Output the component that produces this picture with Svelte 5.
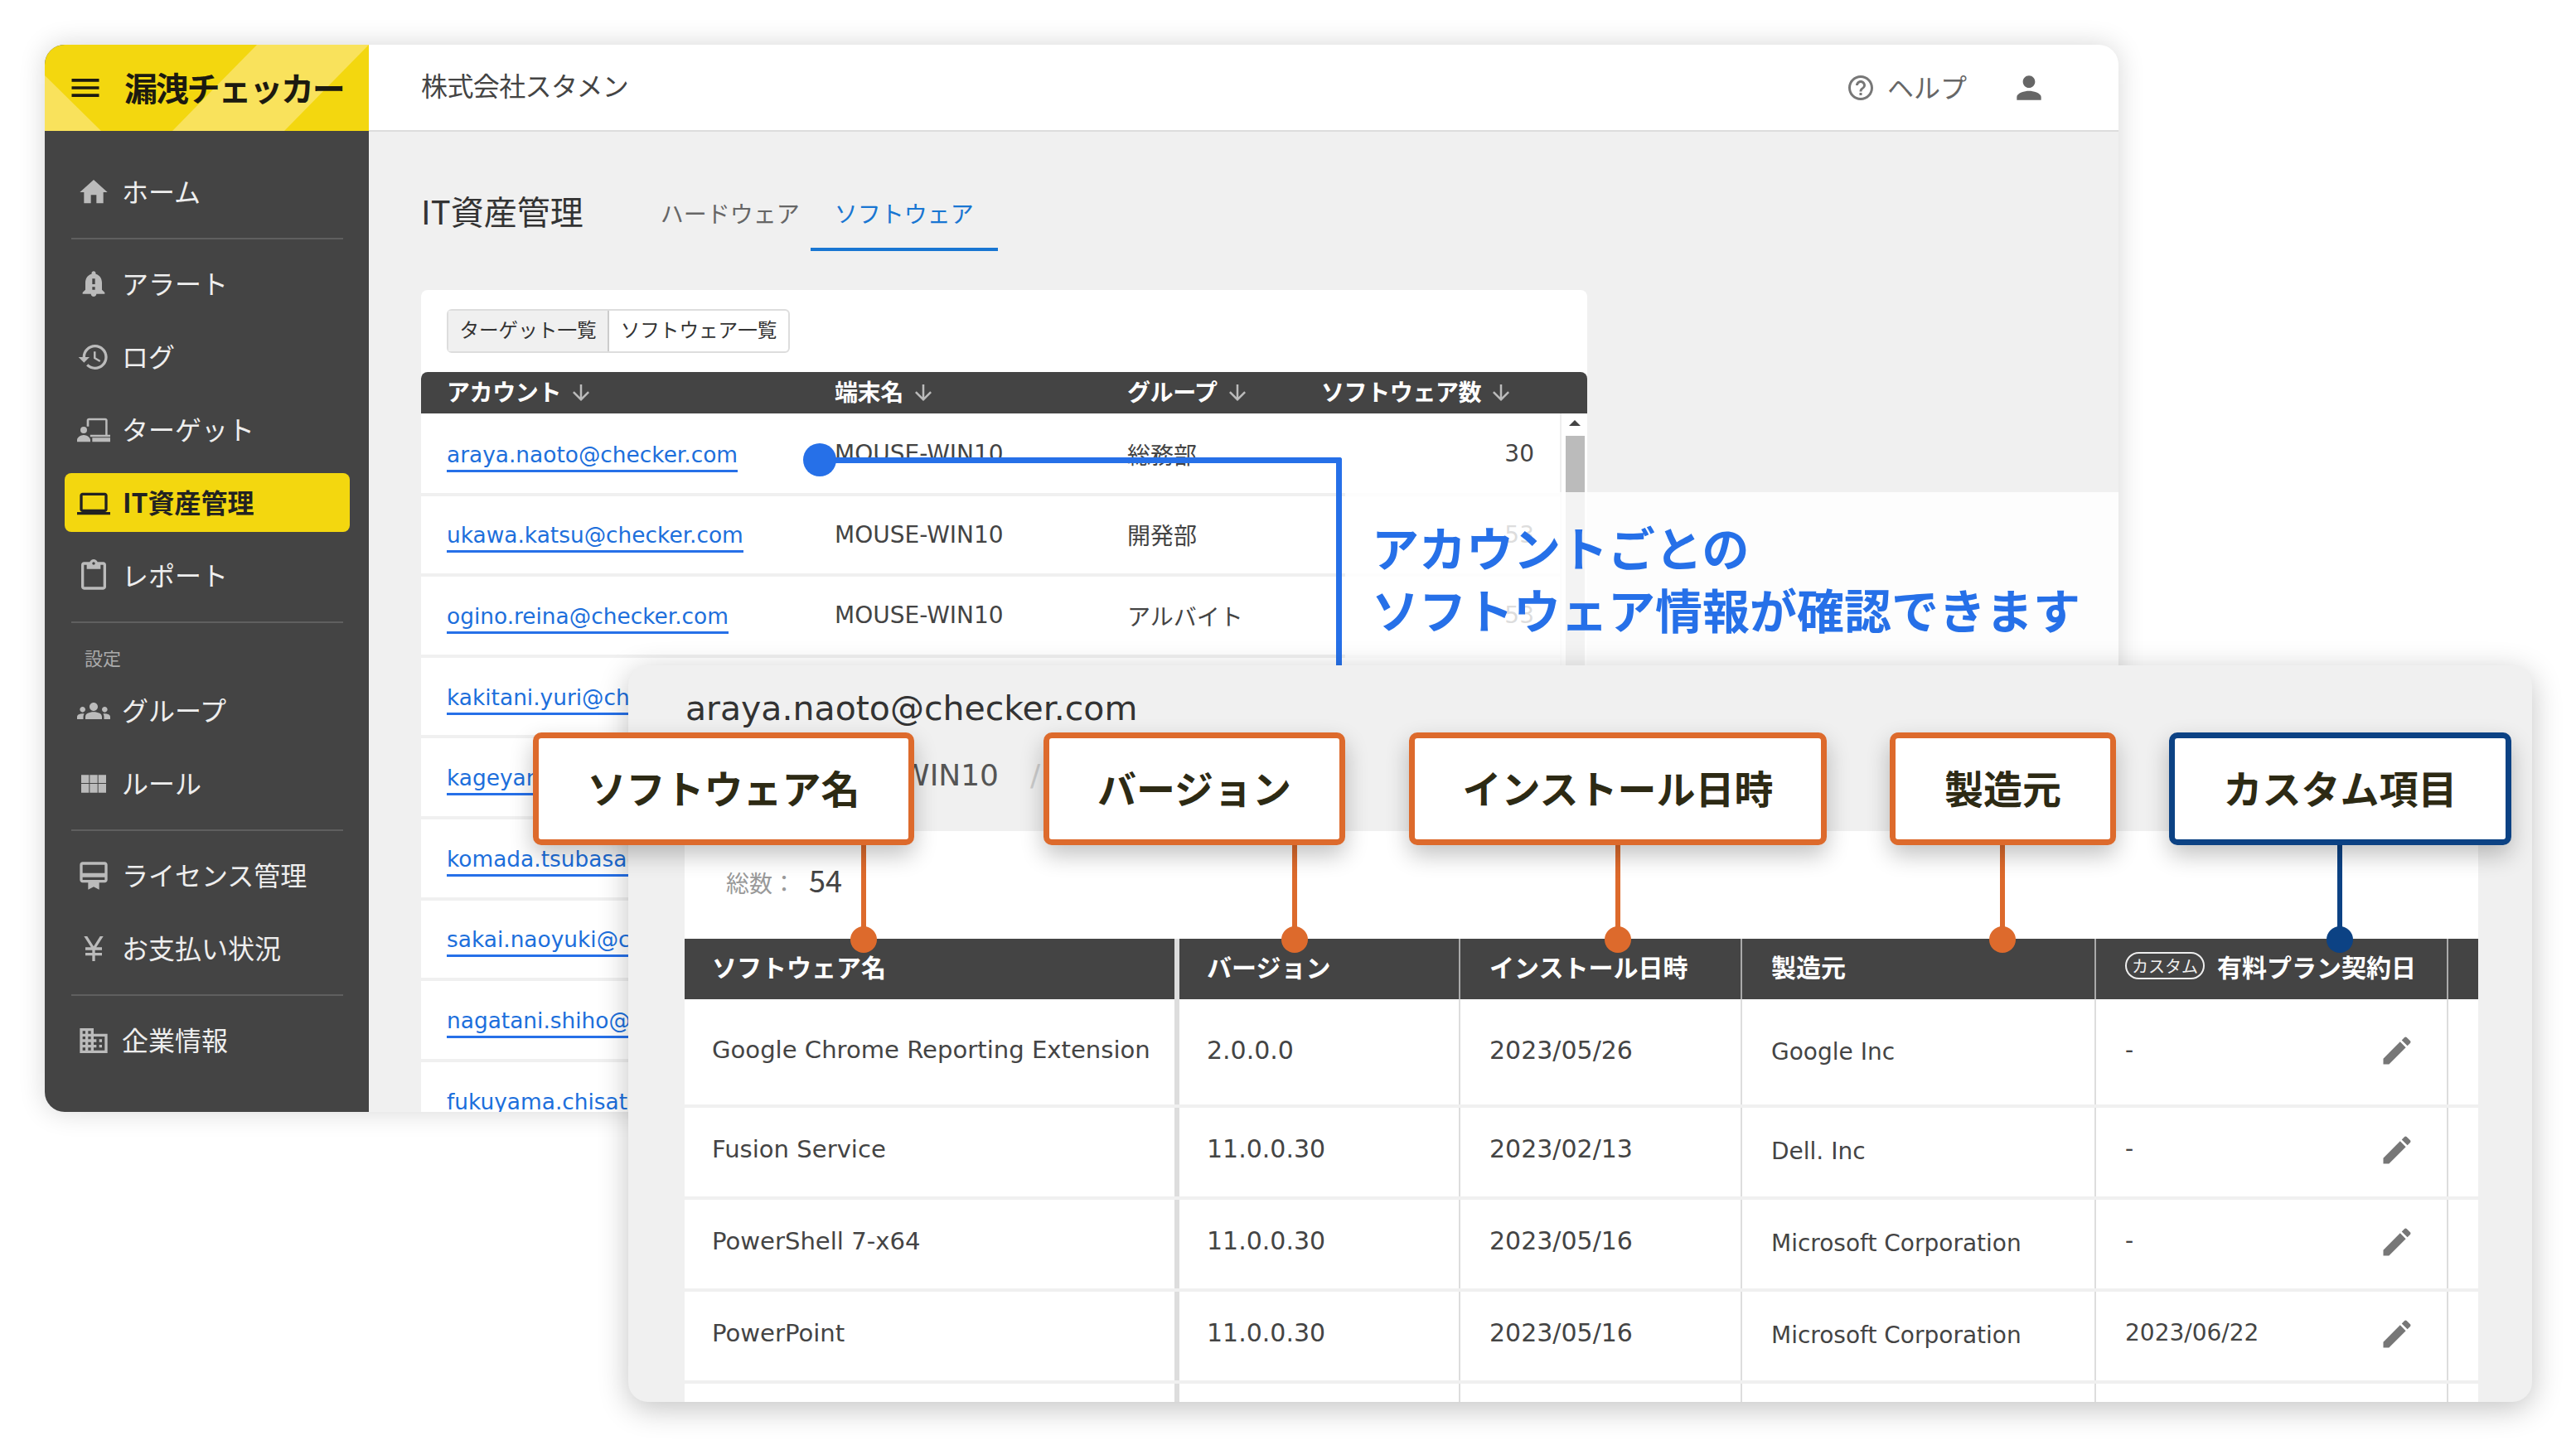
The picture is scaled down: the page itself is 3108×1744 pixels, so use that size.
<script>
  const I = {
    home: 'M10 20v-6h4v6h5v-8h3L12 3 2 12h3v8z',
    bell: 'M18 16v-5c0-3.07-1.64-5.64-4.5-6.32V4c0-.83-.67-1.5-1.5-1.5s-1.5.67-1.5 1.5v.68C7.63 5.36 6 7.93 6 11v5l-2 2v1h16v-1l-2-2zm-5 0h-2v-2h2v2zm0-4h-2V8h2v4zm-1 9c1.1 0 2-.9 2-2h-4c0 1.1.9 2 2 2z',
    hist: 'M13 3c-4.97 0-9 4.03-9 9H1l3.89 3.89.07.14L9 12H6c0-3.87 3.13-7 7-7s7 3.13 7 7-3.13 7-7 7c-1.93 0-3.68-.79-4.94-2.06l-1.42 1.42C8.27 19.99 10.51 21 13 21c4.97 0 9-4.03 9-9s-4.03-9-9-9zm-1 5v5l4.28 2.54.72-1.21-3.5-2.08V8H12z',
    target: 'M7 5c0-.9.7-1.6 1.6-1.6h11.8c.9 0 1.6.7 1.6 1.6v10.4H24V17H9.5v-1.6h11V5H8.6v4.4H7V5zM4.8 9.6a2.4 2.4 0 1 1 0 4.8 2.4 2.4 0 0 1 0-4.8zM0 19.2c0-1.9 2.7-3.6 4.8-3.6s4.8 1.7 4.8 3.6V20.6H0v-1.4zM11 17.6h13v3H11z',
    laptop: 'M20 18c1.1 0 1.99-.9 1.99-2L22 6c0-1.1-.9-2-2-2H4c-1.1 0-2 .9-2 2v10c0 1.1.9 2 2 2H0v2h24v-2h-4zM4 6h16v10H4V6z',
    clip: 'M19 2h-4.18C14.4.84 13.3 0 12 0c-1.3 0-2.4.84-2.82 2H5c-1.1 0-2 .9-2 2v16c0 1.1.9 2 2 2h14c1.1 0 2-.9 2-2V4c0-1.1-.9-2-2-2zm-7 0c.55 0 1 .45 1 1s-.45 1-1 1-1-.45-1-1 .45-1 1-1zm7 18H5V4h2v3h10V4h2v16z',
    groups: 'M12 12.75c1.63 0 3.07.39 4.24.9 1.08.48 1.76 1.56 1.76 2.73V18H6v-1.61c0-1.18.68-2.26 1.76-2.73 1.17-.52 2.61-.91 4.24-.91zM4 13c1.1 0 2-.9 2-2s-.9-2-2-2-2 .9-2 2 .9 2 2 2zm1.13 1.1c-.37-.06-.74-.1-1.13-.1-.99 0-1.93.21-2.78.58C.48 14.9 0 15.62 0 16.43V18h4.5v-1.61c0-.83.23-1.61.63-2.29zM20 13c1.1 0 2-.9 2-2s-.9-2-2-2-2 .9-2 2 .9 2 2 2zm4 3.43c0-.81-.48-1.53-1.22-1.85-.85-.37-1.79-.58-2.78-.58-.39 0-.76.04-1.13.1.4.68.63 1.46.63 2.29V18H24v-1.57zM12 6c1.66 0 3 1.34 3 3s-1.34 3-3 3-3-1.34-3-3 1.34-3 3-3z',
    grid: 'M3 5.5h5.6v5.9H3zM9.2 5.5h5.6v5.9H9.2zM15.4 5.5H21v5.9h-5.6zM3 12h5.6v6.5H3zM9.2 12h5.6v6.5H9.2zM15.4 12H21v6.5h-5.6z',
    card: 'M20 2H4c-1.11 0-2 .89-2 2v11c0 1.11.89 2 2 2h4v5l4-2 4 2v-5h4c1.11 0 2-.89 2-2V4c0-1.11-.89-2-2-2zm0 13H4v-2h16v2zm0-5H4V4h16v6z',
    yen: 'M13.92 11H18v2h-5v2h5v2h-5v4h-2v-4H6v-2h5v-2H6v-2h4.08L5 3h2.37L12 10.29 16.63 3H19z',
    domain: 'M12 7V3H2v18h20V7H12zM6 19H4v-2h2v2zm0-4H4v-2h2v2zm0-4H4V9h2v2zm0-4H4V5h2v2zm4 12H8v-2h2v2zm0-4H8v-2h2v2zm0-4H8V9h2v2zm0-4H8V5h2v2zm10 12h-8v-2h2v-2h-2v-2h2v-2h-2V9h8v10zm-2-8h-2v2h2v-2zm0 4h-2v2h2v-2z',
    help: 'M11 18h2v-2h-2v2zm1-16C6.48 2 2 6.48 2 12s4.48 10 10 10 10-4.48 10-10S17.52 2 12 2zm0 18c-4.41 0-8-3.59-8-8s3.59-8 8-8 8 3.59 8 8-3.59 8-8 8zm0-14c-2.21 0-4 1.79-4 4h2c0-1.1.9-2 2-2s2 .9 2 2c0 2-3 1.75-3 5h2c0-2.25 3-2.5 3-5 0-2.21-1.79-4-4-4z',
    person: 'M12 12c2.21 0 4-1.79 4-4s-1.79-4-4-4-4 1.79-4 4 1.79 4 4 4zm0 2c-2.67 0-8 1.34-8 4v2h16v-2c0-2.66-5.33-4-8-4z',
    edit: 'M3 17.25V21h3.75L17.81 9.94l-3.75-3.75L3 17.25zM20.71 7.04c.39-.39.39-1.02 0-1.41l-2.34-2.34c-.39-.39-1.02-.39-1.41 0l-1.83 1.83 3.75 3.75 1.83-1.83z',
    menu: 'M3 18h18v-2H3v2zm0-5h18v-2H3v2zm0-7v2h18V6H3z',
    down: 'M20 12l-1.41-1.41L13 16.17V4h-2v12.17l-5.58-5.59L4 12l8 8 8-8z'
  };
  const nav = [
    [['ホーム', 'home']],
    [['アラート', 'bell'], ['ログ', 'hist'], ['ターゲット', 'target'], ['IT資産管理', 'laptop', true], ['レポート', 'clip']],
    [['グループ', 'groups'], ['ルール', 'grid']],
    [['ライセンス管理', 'card'], ['お支払い状況', 'yen']],
    [['企業情報', 'domain']]
  ];
  const accounts = [
    ['araya.naoto@checker.com', 'MOUSE-WIN10', '総務部', '30'],
    ['ukawa.katsu@checker.com', 'MOUSE-WIN10', '開発部', '53'],
    ['ogino.reina@checker.com', 'MOUSE-WIN10', 'アルバイト', '53'],
    ['kakitani.yuri@checker.com', '', '', ''],
    ['kageyama.ken@checker.com', '', '', ''],
    ['komada.tsubasa@checker.com', '', '', ''],
    ['sakai.naoyuki@checker.com', '', '', ''],
    ['nagatani.shiho@checker.com', '', '', ''],
    ['fukuyama.chisato@checker.com', '', '', '']
  ];
  const software = [
    ['Google Chrome Reporting Extension', '2.0.0.0', '2023/05/26', 'Google Inc', '-'],
    ['Fusion Service', '11.0.0.30', '2023/02/13', 'Dell. Inc', '-'],
    ['PowerShell 7-x64', '11.0.0.30', '2023/05/16', 'Microsoft Corporation', '-'],
    ['PowerPoint', '11.0.0.30', '2023/05/16', 'Microsoft Corporation', '2023/06/22']
  ];
  const callouts = [
    { t: 'ソフトウェア名', l: 643, w: 460, s: 1042 },
    { t: 'バージョン', l: 1259, w: 364, s: 1562 },
    { t: 'インストール日時', l: 1700, w: 504, s: 1952 },
    { t: '製造元', l: 2280, w: 273, s: 2416 },
    { t: 'カスタム項目', l: 2617, w: 413, s: 2823, navy: true }
  ];
</script>

{#snippet icon(d, cls = 'ic')}
  <svg class={cls} viewBox="0 0 24 24" aria-hidden="true"><path {d} /></svg>
{/snippet}

<div class="canvas">
  <section class="win back">
    <aside class="side">
      <div class="brand">
        <svg class="stripes" viewBox="0 0 391 104" preserveAspectRatio="none" aria-hidden="true">
          <polygon points="0,37 68,104 0,104" />
          <polygon points="154,104 256,0 391,0 289,104" />
        </svg>
        {@render icon(I.menu, 'burger')}
        <span class="logo">漏洩チェッカー</span>
      </div>
      <nav class="nav">
        {#each nav as group, g}
          {#if g > 0}<div class="rule"></div>{/if}
          {#if g === 2}<div class="label">設定</div>{/if}
          {#each group as [text, ic, active]}
            <div class="item"><div class="pill" class:active>{@render icon(I[ic])}<span>{text}</span></div></div>
          {/each}
        {/each}
      </nav>
    </aside>
    <div class="main">
      <header class="top">
        <span class="co">株式会社スタメン</span>
        <div class="top-right">
          {@render icon(I.help, 'help')}<span class="help-t">ヘルプ</span>
          {@render icon(I.person, 'user')}
        </div>
      </header>
      <div class="content">
        <div class="title-row">
          <h1>IT資産管理</h1>
          <span class="tab">ハードウェア</span>
          <span class="tab on">ソフトウェア</span>
        </div>
        <div class="card">
          <div class="toggle"><span class="sel">ターゲット一覧</span><span>ソフトウェア一覧</span></div>
          <div class="ahead">
            <span>アカウント{@render icon(I.down, 'arrow')}</span>
            <span>端末名{@render icon(I.down, 'arrow')}</span>
            <span>グループ{@render icon(I.down, 'arrow')}</span>
            <span>ソフトウェア数{@render icon(I.down, 'arrow')}</span>
          </div>
          <div class="abody">
            {#each accounts as [mail, dev, grp, n]}
              <div class="arow">
                <span><span class="mail">{mail}</span></span>
                <span class="lat">{dev}</span><span>{grp}</span><span class="num lat">{n}</span>
              </div>
            {/each}
            <div class="sbar"><i class="up"></i><i class="thumb"></i></div>
          </div>
        </div>
      </div>
    </div>
  </section>

  <div class="band">
    <p>アカウントごとの<br />ソフトウェア情報が確認できます</p>
  </div>
  <div class="lead"></div>
  <div class="lead-dot"></div>

  <section class="win front">
    <div class="fhead">
      <div class="ftitle">araya.naoto@checker.com</div>
      <div class="crumb"><span class="cname">MOUSE-WIN10</span><span class="slash">/</span></div>
    </div>
    <div class="panel">
      <div class="count"><span class="cl">総数：</span><span class="cv">54</span></div>
      <div class="srow shead">
        <div>ソフトウェア名</div><div>バージョン</div><div>インストール日時</div><div>製造元</div>
        <div><span class="badge">カスタム</span>有料プラン契約日</div><div></div>
      </div>
      {#each software as [a, b, c, d, e], i}
        <div class="srow sbody" class:first={i === 0}>
          <div class="name">{a}</div><div>{b}</div><div>{c}</div><div class="maker">{d}</div>
          <div class="cust"><span>{e}</span>{@render icon(I.edit, 'pen')}</div><div></div>
        </div>
      {/each}
      <div class="srow sbody tail"><div></div><div></div><div></div><div></div><div></div><div></div></div>
    </div>
  </section>

  {#each callouts as c}
    <div class="stem" class:navy={c.navy} style:left="{c.s - 3}px"></div>
    <div class="dot" class:navy={c.navy} style:left="{c.s - 16}px"></div>
    <div class="call" class:navy={c.navy} style:left="{c.l}px" style:width="{c.w}px">{c.t}</div>
  {/each}
</div>

<style>
  :global(body) { margin: 0; background: #fff; }
  .canvas {
    position: relative; width: 3108px; height: 1744px; overflow: hidden; background: #fff;
    font-family: "Noto Sans CJK JP", "Noto Sans", sans-serif; color: #444;
  }
  .win { position: absolute; overflow: hidden; border-radius: 24px; }
  .back {
    left: 54px; top: 54px; width: 2502px; height: 1288px; display: flex; background: #f0f0f0;
    box-shadow: 0 0 32px rgba(0, 0, 0, .16);
  }
  svg { display: block; fill: currentColor; flex: none; }

  .side { width: 391px; flex: none; background: #444; display: flex; flex-direction: column; }
  .brand { position: relative; height: 104px; background: #f3d70f; display: flex; align-items: center; color: #1c1a10; }
  .stripes { position: absolute; inset: 0; width: 100%; height: 100%; fill: #f9e25c; }
  .burger { position: relative; width: 44px; height: 44px; margin-left: 27px; }
  .logo { position: relative; margin-left: 25px; margin-top: -2px; font-size: 40px; font-weight: 700; letter-spacing: -2.2px; white-space: nowrap; line-height: 1; }
  .nav { display: flex; flex-direction: column; padding-top: 28px; }
  .rule { height: 2px; background: #5f5f5f; margin: 13px 31px 8px 32px; }
  .label { font-size: 22px; color: #aaa; padding: 19px 0 0 48px; height: 33px; line-height: 28px; }
  .item { height: 88px; display: flex; align-items: center; padding: 0 23px 0 24px; }
  .pill { flex: 1; height: 71px; display: flex; align-items: center; gap: 14px; padding-left: 15px; border-radius: 8px; color: #eee; font-size: 32px; white-space: nowrap; }
  .ic { width: 40px; height: 40px; color: #bbb; margin-top: 3px; }
  .pill.active { background: #f3d70f; color: #222; font-weight: 700; margin-top: 2px; }
  .pill.active span { margin-top: -2px; margin-left: 1px; }
  .pill.active .ic { color: #222; }

  .main { flex: 1; min-width: 0; display: flex; flex-direction: column; }
  .top { height: 105px; flex: none; box-sizing: border-box; background: #fff; border-bottom: 2px solid #ddd; display: flex; align-items: center; padding-left: 63px; }
  .co { font-size: 32px; color: #444; margin-top: -8px; letter-spacing: -.6px; }
  .top-right { margin-left: auto; display: flex; align-items: center; color: #777; margin-right: 86px; }
  .help { width: 36px; height: 36px; margin-right: 14px; }
  .help-t { font-size: 32px; margin-top: -4px; color: #666; }
  .user { width: 44px; height: 44px; margin-left: 53px; color: #666; }
  .content { padding-left: 63px; }
  .title-row { height: 144px; display: flex; align-items: flex-end; }
  h1 { margin: 0 0 21px; font-size: 40px; font-weight: 400; color: #333; line-height: 56px; white-space: nowrap; }
  .tab { height: 88px; box-sizing: border-box; line-height: 84px; font-size: 28px; color: #666; white-space: nowrap; padding: 0 13px 0 29px; }
  .title-row h1 + .tab { margin-left: 64px; }
  .tab.on { color: #1976d2; border-bottom: 4px solid #1976d2; padding: 0 29px; }
  .card { width: 1407px; margin-top: 47px; background: #fff; border-radius: 8px 8px 0 0; padding-top: 23px; }
  .toggle { display: flex; width: 414px; height: 53px; box-sizing: border-box; margin: 0 0 23px 31px; border: 2px solid #ddd; border-radius: 6px; font-size: 23.6px; color: #333; line-height: 44px; }
  .toggle span { flex: 1; text-align: center; white-space: nowrap; }
  .toggle .sel { flex: none; width: 192px; background: #f0f0f0; border-right: 2px solid #ccc; }
  .ahead, .arow { display: grid; grid-template-columns: 468px 353px 234px 1fr; padding-left: 31px; }
  .ahead { height: 50px; background: #444; color: #fff; border-radius: 8px 8px 0 0; font-size: 28px; font-weight: 700; align-items: center; line-height: 1; letter-spacing: -.4px; }
  .ahead span { display: flex; align-items: center; white-space: nowrap; margin-top: -5px; }
  .arrow { width: 30px; height: 30px; margin-left: 9px; margin-top: 5px; color: #bbb; }
  .abody { position: relative; padding-top: 2px; }
  .arow { height: 97.6px; box-sizing: border-box; border-bottom: 4px solid #f0f0f0; align-items: center; font-size: 28px; white-space: nowrap; }
  .lat { font-family: "DejaVu Sans", sans-serif; }
  .mail { color: #1d6fdc; border-bottom: 3px solid #2670e8; font-family: "DejaVu Sans", sans-serif; font-size: 26.4px; line-height: 36px; display: inline-block; }
  .num { text-align: right; padding-right: 64px; }
  .sbar { position: absolute; right: 0; top: 0; bottom: 0; width: 33px; background: #fff; border-left: 2px solid #eee; box-sizing: border-box; }
  .up { position: absolute; left: 9px; top: 8px; border: 6px solid transparent; border-top: 0; border-bottom: 7px solid #444; border-left-width: 7px; border-right-width: 7px; }
  .thumb { position: absolute; left: 5px; right: 3px; top: 27px; height: 400px; background: #bbb; }

  .band { position: absolute; left: 1623px; top: 594px; width: 933px; height: 212px; background: rgba(255, 255, 255, .82); box-sizing: border-box; padding: 28px 0 0 32px; }
  .band p { margin: 0; color: #2670e8; font-size: 57px; font-weight: 700; line-height: 75px; white-space: nowrap; }
  .lead { position: absolute; left: 989px; top: 552px; width: 630px; height: 260px; box-sizing: border-box; border-top: 7px solid #2670e8; border-right: 7px solid #2670e8; border-top-right-radius: 3px; }
  .lead-dot { position: absolute; left: 969px; top: 535px; width: 40px; height: 40px; border-radius: 50%; background: #2670e8; }

  .front { left: 758px; top: 803px; width: 2297px; height: 889px; background: #f0f0f0; box-shadow: 0 8px 36px rgba(0, 0, 0, .24); }
  .fhead { height: 200px; padding: 26px 0 0 69px; box-sizing: border-box; }
  .ftitle { font-family: "DejaVu Sans", sans-serif; font-size: 41px; line-height: 52px; color: #333; }
  .crumb { display: flex; margin-top: 33px; font-family: "DejaVu Sans", sans-serif; font-size: 36px; line-height: 44px; color: #555; }
  .cname { width: 378px; text-align: right; white-space: nowrap; }
  .slash { margin-left: 38px; color: #ccc; }
  .panel { margin-left: 68px; width: 2164px; height: 689px; background: #fff; overflow: hidden; }
  .count { height: 130px; box-sizing: border-box; padding: 32px 0 0 50px; display: flex; align-items: baseline; }
  .cl { font-size: 28px; color: #999; width: 100px; }
  .cv { font-size: 36px; color: #444; }
  .srow { display: grid; grid-template-columns: 597px 339px 340px 427px 425px 36px; }
  .srow > div { box-sizing: border-box; padding-left: 35px; display: flex; align-items: center; white-space: nowrap; border-right: 2px solid #ddd; }
  .srow > div:first-child { border-right: 6px solid #ddd; padding-left: 33px; }
  .srow > div:nth-child(2) { padding-left: 33px; }
  .srow > div:last-child { padding: 0; border: 0; }
  .shead { height: 73px; background: #444; color: #fff; font-size: 30px; font-weight: 700; }
  .shead > div { border-right-color: #aaa; padding-bottom: 8px; }
  .badge { font-size: 20px; font-weight: 400; width: 96px; height: 33px; box-sizing: border-box; border: 2px solid #eee; border-radius: 17px; display: flex; align-items: center; justify-content: center; margin-right: 15px; color: #eee; }
  .sbody { height: 111px; box-sizing: border-box; font-family: "DejaVu Sans", sans-serif; font-size: 30px; border-bottom: 4px solid #f0f0f0; }
  .sbody.first { height: 131px; }
  .sbody > div { padding-bottom: 8px; }
  .sbody.first > div { padding-bottom: 5px; }
  .tail { border: 0; }
  .name { font-size: 29.1px; }
  .maker { font-size: 28px; padding-top: 5px; }
  .cust { justify-content: space-between; padding-right: 38px; font-size: 28px; }
  .pen { width: 44px; height: 44px; color: #777; margin-top: 2px; }

  .call {
    position: absolute; top: 884px; height: 136px; padding-bottom: 5px; box-sizing: border-box; background: #fff; border: 7px solid #dd6a2c; border-radius: 10px;
    display: flex; align-items: center; justify-content: center; font-size: 47px; font-weight: 700; color: #2d2a14; white-space: nowrap;
    box-shadow: 0 12px 28px rgba(0, 0, 0, .24);
  }
  .stem { position: absolute; top: 1018px; width: 6px; height: 116px; background: #dd6a2c; }
  .dot { position: absolute; top: 1118px; width: 32px; height: 32px; border-radius: 50%; background: #dd6a2c; }
  .call.navy { border-color: #0c4284; }
  .stem.navy, .dot.navy { background: #0c4284; }
</style>
